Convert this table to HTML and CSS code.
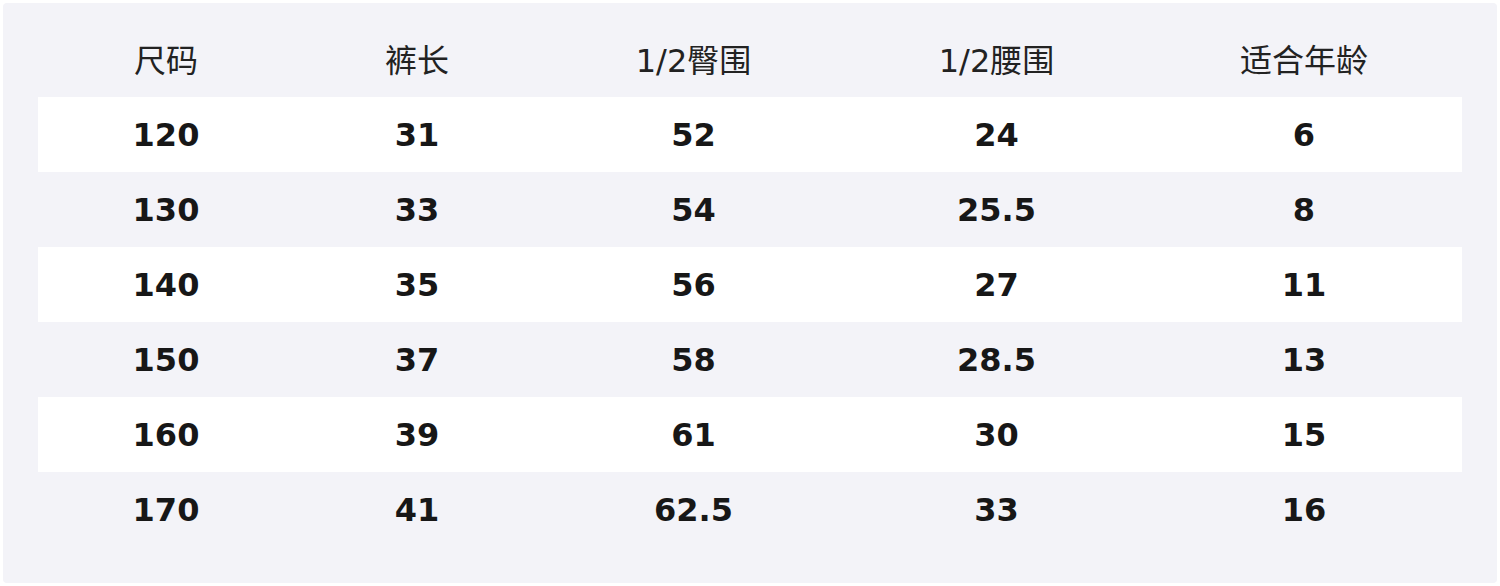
FILE: index.html
```html
<!DOCTYPE html>
<html lang="zh">
<head>
<meta charset="utf-8">
<title>尺码表</title>
<link rel="stylesheet" href="styles.css">
</head>
<body>
<div class="sheet">
  <table class="size-table">
    <colgroup>
      <col class="c1"><col class="c2"><col class="c3"><col class="c4"><col class="c5">
    </colgroup>
    <thead>
      <tr><th>尺码</th><th>裤长</th><th>1/2臀围</th><th>1/2腰围</th><th>适合年龄</th></tr>
    </thead>
    <tbody>
      <tr class="light"><td>120</td><td>31</td><td>52</td><td>24</td><td>6</td></tr>
      <tr><td>130</td><td>33</td><td>54</td><td>25.5</td><td>8</td></tr>
      <tr class="light"><td>140</td><td>35</td><td>56</td><td>27</td><td>11</td></tr>
      <tr><td>150</td><td>37</td><td>58</td><td>28.5</td><td>13</td></tr>
      <tr class="light"><td>160</td><td>39</td><td>61</td><td>30</td><td>15</td></tr>
      <tr><td>170</td><td>41</td><td>62.5</td><td>33</td><td>16</td></tr>
    </tbody>
  </table>
</div>
</body>
</html>
```
FILE: styles.css
```css
html, body {
  margin: 0;
  padding: 0;
  background: #ffffff;
}
.sheet {
  margin: 3px;
  width: 1494px;
  height: 580px;
  box-sizing: border-box;
  padding: 19px 35px 36px;
  background: #f3f3f8;
  border-radius: 4px;
}
.size-table {
  width: 1424px;
  border-collapse: collapse;
  table-layout: fixed;
  font-family: "DejaVu Sans", "Noto Sans CJK SC", sans-serif;
  font-size: 32px;
  color: #1c1c1e;
}
.c1 { width: 256px; }
.c2 { width: 246px; }
.c3 { width: 307px; }
.c4 { width: 299px; }
.c5 { width: 316px; }
.size-table th,
.size-table td {
  height: 75px;
  padding: 0;
  text-align: center;
  vertical-align: middle;
}
.size-table th {
  box-sizing: border-box;
  padding-bottom: 4px;
  font-weight: normal;
  color: #222222;
}
.size-table td {
  font-weight: bold;
  color: #171717;
}
.size-table tr.light td {
  background: #ffffff;
}
```
